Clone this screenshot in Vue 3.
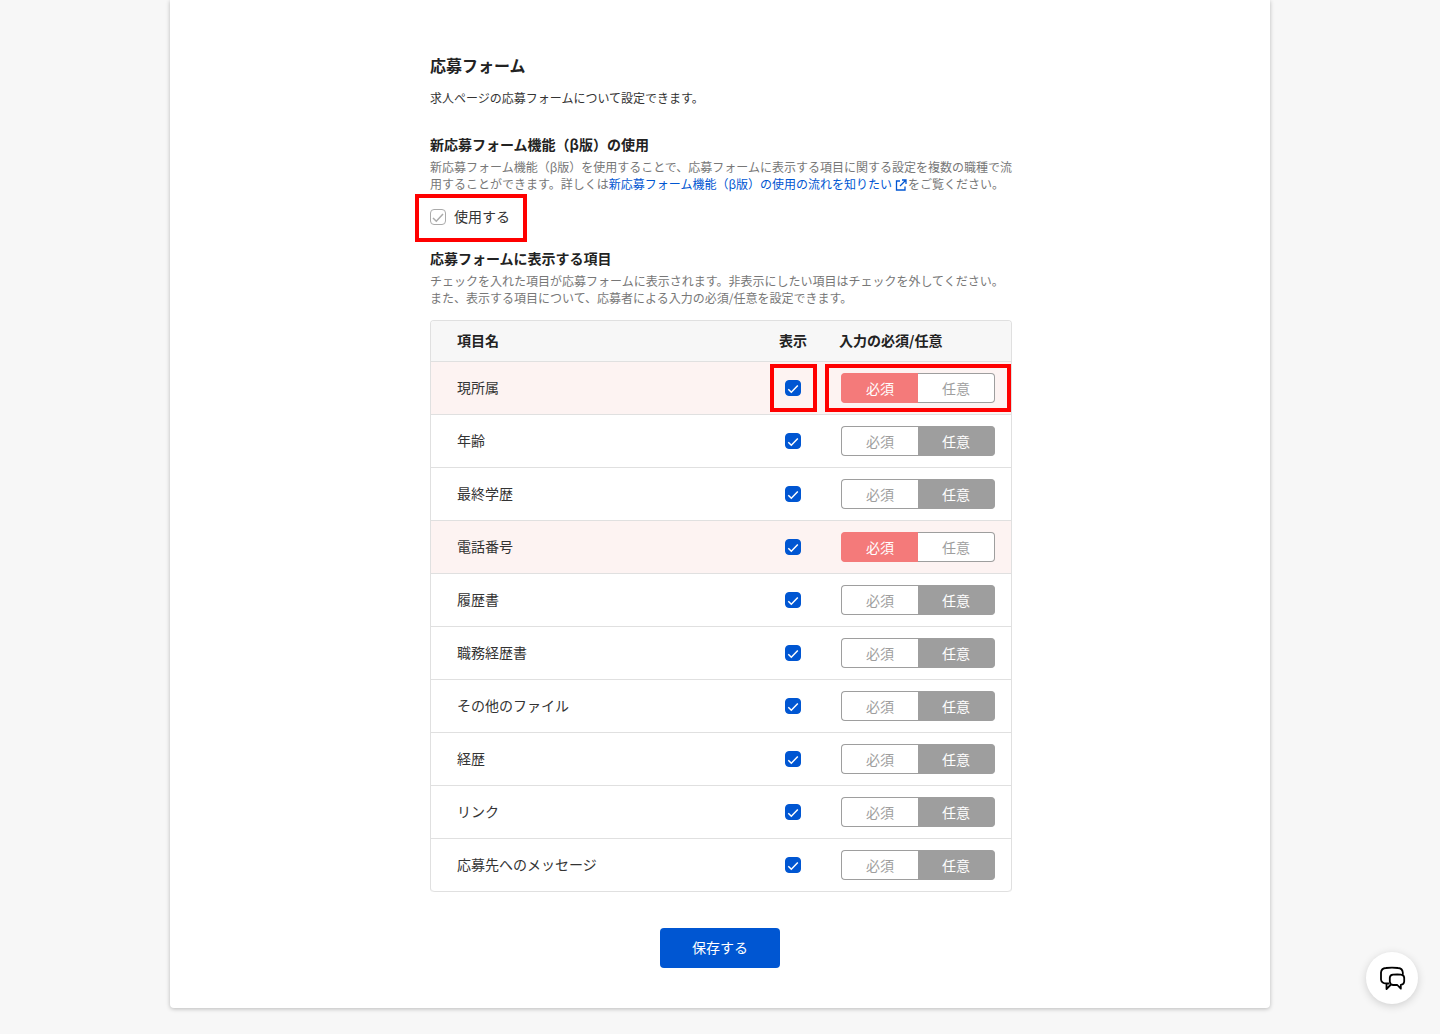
<script setup>
import { ref } from 'vue';

const useNewForm = ref(true);

const items = ref([
    { id: 'affiliation', label: '現所属', visible: true, mode: 'required', marked: true },
    { id: 'age', label: '年齢', visible: true, mode: 'optional' },
    { id: 'education', label: '最終学歴', visible: true, mode: 'optional' },
    { id: 'phone', label: '電話番号', visible: true, mode: 'required' },
    { id: 'resume', label: '履歴書', visible: true, mode: 'optional' },
    { id: 'cv', label: '職務経歴書', visible: true, mode: 'optional' },
    { id: 'files', label: 'その他のファイル', visible: true, mode: 'optional' },
    { id: 'career', label: '経歴', visible: true, mode: 'optional' },
    { id: 'links', label: 'リンク', visible: true, mode: 'optional' },
    { id: 'message', label: '応募先へのメッセージ', visible: true, mode: 'optional' }
]);

const modes = [
    { value: 'required', label: '必須' },
    { value: 'optional', label: '任意' }
];

const save = () => {
    console.log(items.value);
};
</script>

<template>
    <div class="page">
        <form class="card" @submit.prevent="save">
            <div class="content">
                <h2>応募フォーム</h2>
                <p class="lead">求人ページの応募フォームについて設定できます。</p>

                <h3>新応募フォーム機能（β版）の使用</h3>
                <p class="hint">
                    新応募フォーム機能（β版）を使用することで、応募フォームに表示する項目に関する設定を複数の職種で流用することができます。詳しくは<a href="#">新応募フォーム機能（β版）の使用の流れを知りたい<svg class="external" viewBox="0 0 12 12" aria-hidden="true"><path d="M5 2H1.5V11H10V7.5M7 1H11V5M11 1L5 7" /></svg></a>をご覧ください。
                </p>
                <label class="use marked">
                    <span class="check">
                        <input v-model="useNewForm" type="checkbox" disabled />
                        <svg viewBox="0 0 16 16" aria-hidden="true"><path d="M3 9L6.3 12.2L13 5" /></svg>
                    </span>
                    使用する
                </label>

                <h3>応募フォームに表示する項目</h3>
                <p class="hint">
                    チェックを入れた項目が応募フォームに表示されます。非表示にしたい項目はチェックを外してください。<br>
                    また、表示する項目について、応募者による入力の必須/任意を設定できます。
                </p>

                <table>
                    <thead>
                        <tr>
                            <th class="name">項目名</th>
                            <th class="show">表示</th>
                            <th class="mode">入力の必須/任意</th>
                        </tr>
                    </thead>
                    <tbody>
                        <tr v-for="item in items" :key="item.id" :class="{ required: item.mode === 'required' }">
                            <td class="name"><label :for="item.id">{{ item.label }}</label></td>
                            <td class="show" :class="{ marked: item.marked }">
                                <span class="check">
                                    <input :id="item.id" v-model="item.visible" type="checkbox" />
                                    <svg v-if="item.visible" viewBox="0 0 16 16" aria-hidden="true"><path d="M3.3 9.2L6.3 12.2L12.8 5.5" /></svg>
                                </span>
                            </td>
                            <td class="mode" :class="{ marked: item.marked }">
                                <div class="toggle" role="radiogroup" :aria-label="item.label">
                                    <label v-for="mode in modes" :key="mode.value" :class="[mode.value, { active: item.mode === mode.value }]">
                                        <input v-model="item.mode" type="radio" :name="item.id + '-mode'" :value="mode.value" />
                                        {{ mode.label }}
                                    </label>
                                </div>
                            </td>
                        </tr>
                    </tbody>
                </table>
            </div>

            <div class="actions">
                <button type="submit" class="save">保存する</button>
            </div>
        </form>

        <button type="button" class="chat" aria-label="チャット">
            <svg viewBox="0 0 28 28" aria-hidden="true">
                <path d="M11.3 19.5H8.5C4.8 19.3 3.2 18.3 3 15.5V8.5C3.2 5.5 4.8 4.2 8 4C12 3.6 16 3.6 20 4C23 4.2 24.6 5.5 24.8 8.5V10.5M8.5 19.5V25L13 20.5" />
                <path d="M15 10.7C18 10.4 20.5 10.4 23 10.7C25.2 10.9 26 11.8 26.2 13.7V17.5C26 19.8 25.2 20.7 22.8 20.9V24.7L19.3 21H15C12.8 20.8 12 19.8 11.8 17.5V13.7C12 11.8 12.8 10.9 15 10.7Z" />
            </svg>
        </button>
    </div>
</template>

<style>
body {
    margin: 0;
    background: #f7f7f7;
}
</style>

<style scoped>
.page {
    padding-bottom: 26px;
    color: #333;
    font-family: "Noto Sans CJK JP", sans-serif;
    font-size: 14px;
    line-height: 20px;
}

.card {
    max-width: 1100px;
    margin: 0 auto;
    padding: 53px 0 40px;
    box-sizing: border-box;
    background: #fff;
    border-radius: 0 0 4px 4px;
    box-shadow: 0 1px 4px rgba(0, 0, 0, 0.25);
}

.content {
    max-width: 582px;
    margin: 0 auto;
    padding-left: 2px;
}

h2,
h3,
p {
    margin: 0;
}

h2,
h3,
th {
    color: #222;
}

h2 {
    font-size: 16px;
    line-height: 24px;
}

h3 {
    font-size: 14px;
}

.lead {
    margin: 12px 0 27px;
    font-size: 12px;
    line-height: 18px;
}

.hint {
    margin: 4px -4px 0 0;
    color: #777;
    font-size: 12px;
    line-height: 17px;
}

a {
    color: #0056d2;
    text-decoration: none;
}

.external {
    width: 12px;
    height: 12px;
    margin: 0 1px 0 3px;
    vertical-align: -2px;
    fill: none;
    stroke: currentColor;
    stroke-width: 1.3;
}

.use {
    display: flex;
    align-items: center;
    gap: 8px;
    width: 80px;
    margin: 14px 0 22px;
}

.check {
    display: grid;
    width: 16px;
    height: 16px;
}

.check input,
.check svg {
    grid-area: 1 / 1;
    width: 16px;
    height: 16px;
    margin: 0;
}

.check input {
    appearance: none;
    box-sizing: border-box;
    border: 1px solid #aaa;
    border-radius: 4px;
    background: #fff;
}

.check input:checked:enabled {
    border-color: #0056d2;
    background: #0056d2;
}

.check svg {
    fill: none;
    stroke: #fff;
    stroke-width: 1.5;
    pointer-events: none;
}

.use .check {
    margin-top: 2px;
}

.use .check svg {
    stroke: #aaa;
}

.show .check {
    margin: 0 auto;
}

/* red frames around the controls being explained */
.marked {
    position: relative;
}

.marked::after {
    content: "";
    position: absolute;
    inset: 2px 2px 2px 3px;
    border: 4px solid #f00;
    pointer-events: none;
}

.use.marked::after {
    inset: -12px -17px -16px -15px;
}

.mode.marked::after {
    inset: 2px 0 2px 6px;
}

table {
    width: 100%;
    margin-top: 14px;
    border: 1px solid #e0e0e0;
    border-bottom: 0;
    border-radius: 4px;
    border-spacing: 0;
    table-layout: fixed;
}

th,
td {
    box-sizing: border-box;
    height: 53px;
    padding: 0;
    border-bottom: 1px solid #e0e0e0;
    text-align: left;
    vertical-align: middle;
}

th {
    height: 41px;
    padding-bottom: 2px;
    background: #f7f7f7;
}

th:first-child {
    border-top-left-radius: 3px;
}

th:last-child {
    border-top-right-radius: 3px;
}

tr:last-child td:first-child {
    border-bottom-left-radius: 4px;
}

tr:last-child td:last-child {
    border-bottom-right-radius: 4px;
}

.required td {
    background: #fdf3f2;
}

.name {
    padding-bottom: 2px;
    padding-left: 26px;
}

.show {
    width: 52px;
    text-align: center;
}

.mode {
    width: 192px;
    padding-left: 20px;
}

.toggle {
    display: flex;
    width: 154px;
    margin-left: 2px;
}

.toggle label {
    flex: 1;
    box-sizing: border-box;
    height: 30px;
    border: 1px solid #9e9e9e;
    background: #fff;
    color: #9e9e9e;
    line-height: 28px;
    text-align: center;
}

.toggle label:first-child {
    border-right: 0;
    border-radius: 4px 0 0 4px;
}

.toggle label:last-child {
    border-left: 0;
    border-radius: 0 4px 4px 0;
}

.toggle .active {
    background: #9e9e9e;
    color: #fff;
}

.toggle .required.active {
    border-color: #f47a7a;
    background: #f47a7a;
}

.toggle input {
    position: absolute;
    width: 1px;
    height: 1px;
    margin: 0;
    opacity: 0;
}

.actions {
    display: flex;
    justify-content: center;
    margin-top: 36px;
}

.save {
    width: 120px;
    height: 40px;
    padding: 0 0 2px;
    border: 0;
    border-radius: 4px;
    background: #0056d2;
    color: #fff;
    font: inherit;
}

.chat {
    position: fixed;
    right: 22px;
    bottom: 30px;
    display: grid;
    place-items: center;
    width: 52px;
    height: 52px;
    padding: 0;
    border: 0;
    border-radius: 50%;
    background: #fff;
    box-shadow: 0 2px 8px rgba(0, 0, 0, 0.16);
}

.chat svg {
    width: 28px;
    height: 28px;
    fill: none;
    stroke: #000;
    stroke-width: 1.8;
    stroke-linejoin: round;
}
</style>
